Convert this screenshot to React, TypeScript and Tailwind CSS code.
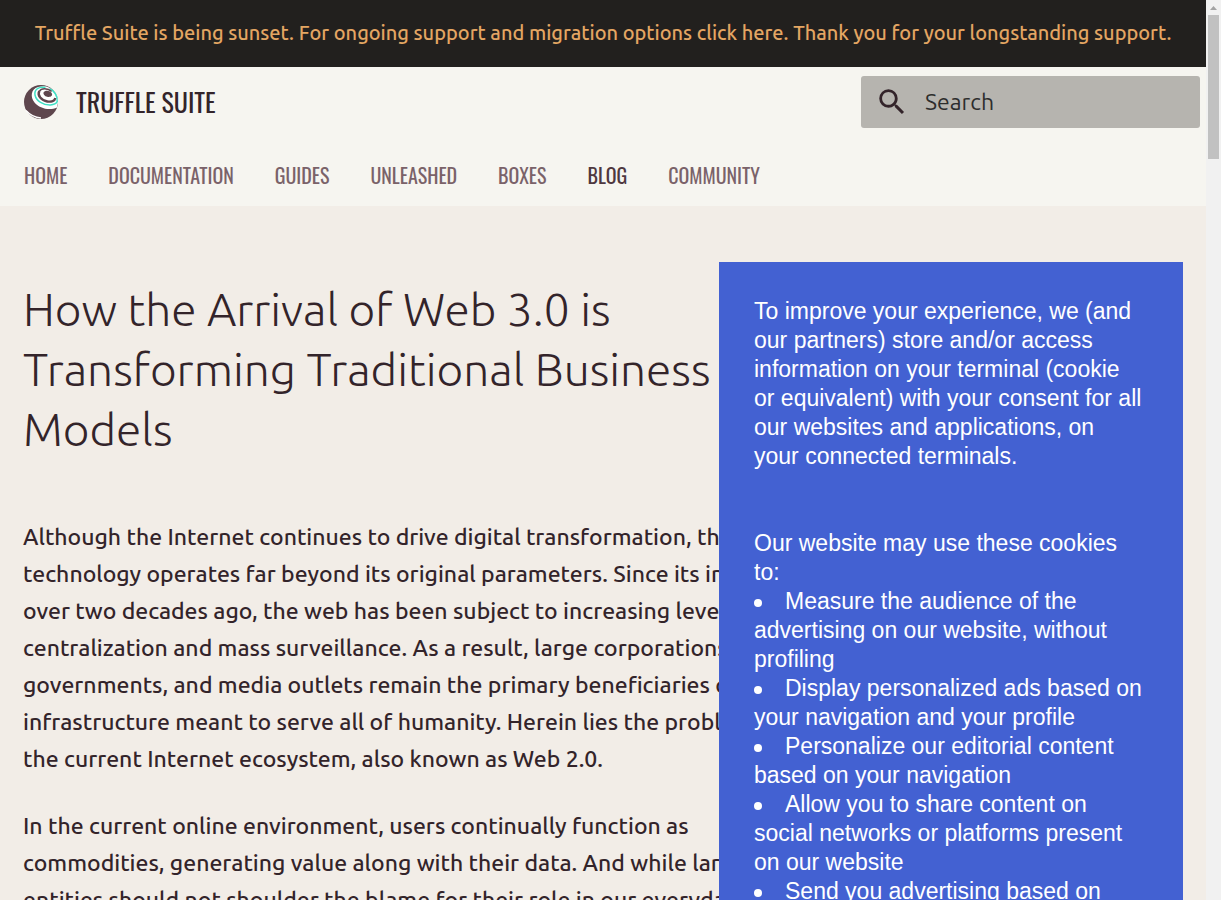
import React from "react";

const navItems = ["HOME", "DOCUMENTATION", "GUIDES", "UNLEASHED", "BOXES", "BLOG", "COMMUNITY"];

const paragraphs = [
  [
    "Although the Internet continues to drive digital transformation, the",
    "technology operates far beyond its original parameters. Since its inception",
    "over two decades ago, the web has been subject to increasing levels of",
    "centralization and mass surveillance. As a result, large corporations,",
    "governments, and media outlets remain the primary beneficiaries of an",
    "infrastructure meant to serve all of humanity. Herein lies the problem with",
    "the current Internet ecosystem, also known as Web 2.0.",
  ],
  [
    "In the current online environment, users continually function as",
    "commodities, generating value along with their data. And while large",
    "entities should not shoulder the blame for their role in our everyday",
  ],
];

const purposes = [
  "Measure the audience of the advertising on our website, without profiling",
  "Display personalized ads based on your navigation and your profile",
  "Personalize our editorial content based on your navigation",
  "Allow you to share content on social networks or platforms present on our website",
  "Send you advertising based on your location",
];

function Logo() {
  return (
    <svg viewBox="0 0 36 36" className="size-9 shrink-0" aria-hidden="true">
      <circle cx="18" cy="18" r="17" fill="#5e464d" />
      <path d="M15 3C8 5 7 13 11.500 18.500c5 6 15 8.500 22.500 5l1.300-6.500C34.500 9 28 2.500 20.500 2.300c-2 0-3.800.2-5.500.7Z" fill="#fff" />
      <path d="M22.500 3.600C16 2 11 5.500 12 11c1.200 6 8.500 10.300 15.500 10 3.200-.2 5.700-1.300 6.700-3.300C35 12 31 6.500 26.500 4.800" fill="none" stroke="#3fe0c5" strokeWidth="1.500" />
      <path d="M16.300 7c-2.300 4.500 2 9.500 8 10.500 4 .6 7.500-.7 8-3.500" fill="none" stroke="#5e464d" strokeWidth="2.400" />
      <path d="M16.300 7.300c2-3.500 8.500-3.500 12.300.2" fill="none" stroke="#5e464d" strokeWidth="1.600" />
      <path d="M20.500 8.500c1.500-2.600 6-2.200 8 .3 2 3-1.300 4.800-4.300 4-2.500-.6-4.300-2.500-3.700-4.300Z" fill="#5e464d" />
      <path d="M3 26.500c4 4.500 9 7 15 7.500" fill="none" stroke="#fff" strokeWidth="1.300" />
    </svg>
  );
}

function Scrollbar() {
  return (
    <div className="flex w-[15px] shrink-0 flex-col items-center bg-[#f1f1f1]" aria-hidden="true">
      <svg viewBox="0 0 15 15" className="size-[15px] shrink-0">
        <path d="M4 10h7L7.500 6Z" fill="#a3a3a3" />
      </svg>
      <div className="h-36 w-[11px] bg-[#c1c1c1]" />
    </div>
  );
}

export default function App() {
  return (
    <div className="flex h-screen overflow-hidden bg-[#f2ede7] font-['Ubuntu','Open_Sans',sans-serif] text-[#33242a]">
      <div className="min-w-0 flex-1 overflow-hidden">
        <div className="bg-[#22201e] px-4 pt-[15px] pb-4 text-center text-[20px] leading-9 font-medium whitespace-nowrap text-[#e4a663]">
          <a href="#sunset">
            Truffle Suite is being sunset. For ongoing support and migration options click here. Thank you for your longstanding support.
          </a>
        </div>
        <header className="bg-[#f6f5f0]">
          <div className="flex items-center justify-between py-[9px] pr-1.5 pl-[23px]">
            <a href="#home" className="flex items-center gap-[17px] font-['Oswald','Liberation_Sans_Narrow',sans-serif] text-[26px] leading-9">
              <Logo />
              TRUFFLE SUITE
            </a>
            <label className="flex h-[52px] w-[339px] items-center gap-4 rounded-[3px] bg-[#b6b4af] pl-3.5">
              <svg viewBox="0 0 24 24" className="size-[34px] shrink-0" fill="#33242a" aria-hidden="true">
                <path d="M9.500 3A6.500 6.500 0 0 1 16 9.500c0 1.610-.59 3.090-1.560 4.230l.27.27h.79l5 5-1.500 1.500-5-5v-.79l-.27-.27A6.516 6.516 0 0 1 9.500 16 6.500 6.500 0 0 1 3 9.500 6.500 6.500 0 0 1 9.500 3m0 2C7 5 5 7 5 9.500S7 14 9.500 14 14 12 14 9.500 12 5 9.500 5Z" />
              </svg>
              <input aria-label="Search" placeholder="Search" className="min-w-0 flex-1 bg-transparent text-[23px] outline-none placeholder:text-[#2d2d2d]" />
            </label>
          </div>
          <nav className="flex gap-[41px] px-6 pt-5 pb-[13px] font-['Oswald','Liberation_Sans_Narrow',sans-serif] text-[20px] leading-9">
            {navItems.map((item) => (
              <a key={item} href={"#" + item.toLowerCase()} className={item === "BLOG" ? "text-[#4e383f]" : "text-[#7a6269]"}>
                {item}
              </a>
            ))}
          </nav>
        </header>
        <main className="relative px-[23px] pt-[73px]">
          <h1 className="w-[700px] text-[46px] leading-[60px] font-light">
            How the Arrival of Web 3.0 is
            <br />
            Transforming Traditional Business
            <br />
            Models
          </h1>
          <article className="mt-[59px] space-y-[30px] text-[23px] leading-[37px] font-medium">
            {paragraphs.map((lines) => (
              <p key={lines[0]}>
                {lines.map((line) => (
                  <span key={line} className="block whitespace-nowrap">
                    {line}
                  </span>
                ))}
              </p>
            ))}
          </article>
          <aside className="absolute top-14 right-[23px] w-[464px] bg-[#4361d2] py-[35px] pr-[39px] pl-[35px] font-['Liberation_Sans',sans-serif] text-[23px] leading-[29px] text-white">
            <p>
              To improve your experience, we (and our partners) store and/or access information on your terminal (cookie or equivalent) with your consent for all our websites and applications, on your connected terminals.
            </p>
            <p className="mt-[58px]">Our website may use these cookies to:</p>
            <ul>
              {purposes.map((purpose) => (
                <li key={purpose}>
                  <span className="mr-[23px] inline-block size-2 rounded-full bg-white align-middle" />
                  {purpose}
                </li>
              ))}
            </ul>
          </aside>
        </main>
      </div>
      <Scrollbar />
    </div>
  );
}
